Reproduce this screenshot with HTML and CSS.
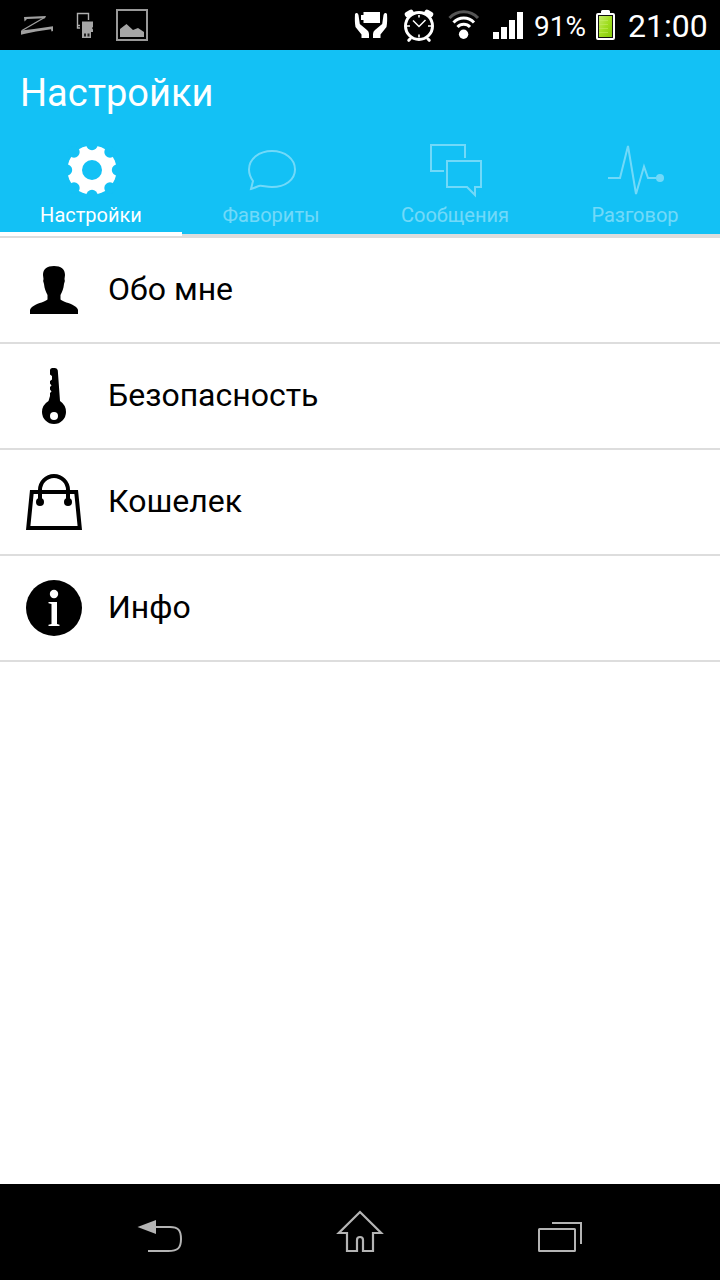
FILE: index.html
```html
<!DOCTYPE html>
<html lang="ru">
<head>
    <meta charset="UTF-8">
    <meta name="viewport" content="width=device-width, initial-scale=1.0">
    <title>Настройки</title>
    <link rel="stylesheet" href="styles.css">
</head>
<body>
    <div class="status-bar">
        <div class="notifications">
            <svg width="34" height="22" viewBox="20 14 34 22" fill="#a0a0a0">
                <path d="M24 17 L46 16 L45 18.200 L27 19 L24.500 21.500 Z"/>
                <path d="M44.500 17.500 L22 30.500" fill="none" stroke="#a0a0a0" stroke-width="1.300"/>
                <path d="M21 30.500 L34 29 L53 26.300 V31 L51.500 31.500 L51 29.200 L36 31.500 L24 34 L21 34.700 Z"/>
            </svg>
            <svg width="18" height="27" viewBox="76 11 18 27">
                <path d="M88.500 19 V12.500 H77.500 V27 H80 M78 24.500 H80" fill="none" stroke="#b0b0b0" stroke-width="1.400"/>
                <path d="M82 20.500 H93 V26 L92 27 L93 28.500 V31 H91 V37 H82 Z" fill="#a6a6a6"/>
                <path d="M84 32.500 H86 V35.500 H84 Z M87.500 32.500 H89.500 V35.500 H87.500 Z" fill="#222"/>
            </svg>
            <svg width="34" height="34" viewBox="116 8 34 34">
                <rect x="117" y="10" width="30" height="30" fill="none" stroke="#999" stroke-width="2"/>
                <path d="M120 37 V29 L126.500 24 L133 30 L138 28 L144 32 V37 Z" fill="#a6a6a6"/>
            </svg>
        </div>
        <div class="system">
            <svg width="34" height="28" viewBox="354 11 34 28" fill="#fff">
                <path d="M363.500 12 H380 V23 H363.500 V20 H361 V15 H363.500 Z"/>
                <path d="M356 13 Q358 12.500 358.500 15 L359.800 24 L367 30 Q369 31.500 369 34 V38 H361.500 V34.500 L355.500 27 Q354.500 22 355 14 Z"/>
                <path d="M386 13 Q384 12.500 383.500 15 L382.200 24 L375 30 Q373 31.500 373 34 V38 H380.500 V34.500 L386.500 27 Q387.500 22 387 14 Z"/>
            </svg>
            <svg class="alarm" width="32" height="34" viewBox="403 8 32 34" fill="none" stroke="#fff">
                <path d="M407.500 14.500 L411 12.500 M430.500 14.500 L427 12.500" stroke-width="5.500" stroke-linecap="round"/>
                <path d="M410 39 L408.800 40.300 M428 39 L429.200 40.300" stroke-width="3" stroke-linecap="round"/>
                <circle cx="419" cy="26" r="13.500" fill="#000" stroke-width="3"/>
                <path d="M419 15 V17.500 M419 34.500 V37.500 M407 26 H410 M428 26 H431" stroke-width="1.600"/>
                <path d="M413 20.500 L419 26.500 L425.500 20" stroke-width="1.500"/>
            </svg>
            <svg class="wifi" width="32" height="32" viewBox="448 9 32 32" fill="none" stroke="#fff" stroke-width="3">
                <path d="M449.500 18 A19.500 19.500 0 0 1 478 18" stroke="#555"/>
                <path d="M453.500 22.500 A14 14 0 0 1 474 22.500"/>
                <path d="M457.500 27 A8.500 8.500 0 0 1 470 27"/>
                <circle cx="463.600" cy="34.300" r="4.700" fill="#fff" stroke="none"/>
            </svg>
            <svg class="signal" width="31" height="28" viewBox="493 11 31 28" fill="#fff">
                <path d="M493 32 H499 V39 H493 Z M501 27 H507 V39 H501 Z M509 20 H515 V39 H509 Z M517 12 H523 V39 H517 Z"/>
            </svg>
            <span class="percent">91%</span>
            <svg class="battery" width="19" height="30" viewBox="596 10 19 30">
                <defs>
                    <linearGradient id="charge" x1="0" y1="0" x2="1" y2="1">
                        <stop offset="0" stop-color="#c4ea6a"/>
                        <stop offset="0.500" stop-color="#a0de20"/>
                        <stop offset="1" stop-color="#84c808"/>
                    </linearGradient>
                </defs>
                <path d="M601 13 V11.500 Q601 10 602.500 10 H608.500 Q610 10 610 11.500 V13 H613 Q615 13 615 15 V38 Q615 40 613 40 H598 Q596 40 596 38 V15 Q596 13 598 13 Z" fill="#fff"/>
                <rect x="598" y="15" width="15" height="23" fill="#111"/>
                <rect x="599" y="16" width="13" height="21" fill="url(#charge)"/>
                <path d="M599 20.500 H608 M599 24.500 H608 M599 28.500 H608 M599 32.500 H608" stroke="#c4ee60" stroke-width="1" opacity="0.600"/>
            </svg>
            <span class="clock">21:00</span>
        </div>
    </div>

    <header class="header">
        <h1>Настройки</h1>
        <nav class="tabs">
            <a class="tab tab-settings active">
                <svg width="56" height="56" viewBox="63 142 56 56">
                    <circle cx="92" cy="170" r="24.600" fill="#fff"/>
                    <g fill="#13c1f5">
                        <circle cx="92" cy="170" r="10"/>
                        <circle cx="92" cy="144.500" r="5.700"/>
                        <circle cx="110" cy="152" r="5.700"/>
                        <circle cx="117.500" cy="170" r="5.700"/>
                        <circle cx="110" cy="188" r="5.700"/>
                        <circle cx="92" cy="195.500" r="5.700"/>
                        <circle cx="74" cy="188" r="5.700"/>
                        <circle cx="66.500" cy="170" r="5.700"/>
                        <circle cx="74" cy="152" r="5.700"/>
                    </g>
                </svg>
                <span>Настройки</span>
            </a>
            <a class="tab tab-favorites">
                <svg width="56" height="56" viewBox="243 142 56 56" fill="none" stroke="#fff" stroke-width="2">
                    <path d="M251 189 L253 181 Q249 175.500 249 169.500 C249 159 259 151 272 151 C285 151 295 159 295 169.500 C295 180 285 187 272 187 C266 187 263 185.500 260 185.800 C257 186.200 255 188 251 189 Z"/>
                </svg>
                <span>Фавориты</span>
            </a>
            <a class="tab tab-messages">
                <svg width="56" height="56" viewBox="427 142 56 56" fill="none" stroke="#fff" stroke-width="2">
                    <path d="M444 171 H431 V145 H465 V158"/>
                    <path d="M447 161 H481 V187 H475 V195 L467 187 H447 Z"/>
                </svg>
                <span>Сообщения</span>
            </a>
            <a class="tab tab-talk">
                <svg width="60" height="56" viewBox="605 142 60 56" fill="none" stroke="#fff" stroke-width="2">
                    <path d="M608 178 H620 L628 146 L636 194 L644 166.500 L648 178 H656"/>
                    <circle cx="660" cy="178" r="4" fill="#fff" stroke="none"/>
                </svg>
                <span>Разговор</span>
            </a>
        </nav>
    </header>

    <ul class="menu">
        <li>
            <svg width="56" height="56" viewBox="26 262 56 56">
                <path d="M43 275 C43 269 47 266 54 266 C61 266 65 269 65 275 L64.500 279 Q65.500 281 64 284 C63.500 289 62 292 60.500 295 V299.500 C63 302 69 302.500 74.500 306 Q78 308 78 310.500 V314 H30 V310.500 Q30 308 33.500 306 C39 302.500 45 302 47.500 299.500 V295 C46 292 44.500 289 44 284 Q42.500 281 43.500 279 Z"/>
            </svg>
            <span>Обо мне</span>
        </li>
        <li>
            <svg width="56" height="56" viewBox="26 368 56 56">
                <path d="M50 370.500 Q50 368 52.500 368 H55 Q57.500 368 57.800 370.500 L60 401 Q66 405 66 412 A12 12 0 0 1 42 412 Q42 405 48.500 401 L50 396 V393 L51.500 391.500 L50 389.500 V387 L51.500 385.500 L50 383.500 V381 L52 379.500 V376 L50 374.500 Z"/>
                <circle cx="54" cy="416" r="4" fill="#fff"/>
            </svg>
            <span>Безопасность</span>
        </li>
        <li>
            <svg width="56" height="56" viewBox="26 474 56 56">
                <path d="M31.800 492 H76.200 L79.800 528 H28.200 Z M40 502 V490 A14 14 0 0 1 68 490 V502" fill="none" stroke="#000" stroke-width="4"/>
                <circle cx="40" cy="502" r="4"/>
                <circle cx="68" cy="502" r="4"/>
            </svg>
            <span>Кошелек</span>
        </li>
        <li>
            <svg width="56" height="56" viewBox="26 580 56 56">
                <circle cx="54" cy="608" r="28"/>
                <circle cx="54" cy="594" r="4.200" fill="#fff"/>
                <path d="M48.500 602 H57 V624 L59.500 624.800 V626 H48.500 V624.800 L51.500 624 V604 L48.500 603.300 Z" fill="#fff"/>
            </svg>
            <span>Инфо</span>
        </li>
    </ul>

    <footer class="nav-bar">
        <svg width="180" height="60" viewBox="70 1202 180 60" fill="none" stroke="#b4b4b4" stroke-width="2">
            <path d="M155 1227 H170 C178 1227 181 1230 181 1239 C181 1248 178 1251 168 1251 H148"/>
            <path d="M137.500 1227 L156 1220 V1234 Z" fill="#b4b4b4" stroke="none"/>
        </svg>
        <svg width="180" height="60" viewBox="270 1202 180 60" fill="none" stroke="#b4b4b4" stroke-width="2.200">
            <path d="M360 1212 L338.800 1233 H347 V1251 H357 V1240 Q357 1237 360 1237 Q363 1237 363 1240 V1251 H373 V1233 H381.200 Z"/>
        </svg>
        <svg width="180" height="60" viewBox="470 1202 180 60" fill="none" stroke="#b4b4b4" stroke-width="2">
            <rect x="539" y="1229" width="36" height="22" rx="0.500"/>
            <path d="M552 1223 H581 V1244"/>
        </svg>
    </footer>
</body>
</html>
```

FILE: styles.css
```css
* {
    margin: 0;
    padding: 0;
    box-sizing: border-box;
}

body {
    font-family: Roboto, 'Noto Sans', sans-serif;
    background-color: #fff;
    color: #000;
    width: 720px;
    height: 1280px;
    display: flex;
    flex-direction: column;
    overflow: hidden;
}

svg {
    display: block;
    flex-shrink: 0;
}

.status-bar {
    height: 50px;
    background-color: #000;
    color: #fff;
    display: flex;
    justify-content: space-between;
    align-items: center;
    padding: 0 12px 0 20px;
}

.notifications {
    display: flex;
    align-items: center;
    gap: 22px;
}

.system {
    display: flex;
    align-items: center;
}

.alarm {
    margin-left: 15px;
}

.wifi {
    margin-left: 13px;
}

.signal {
    margin-left: 13px;
    margin-right: 10px;
}

.percent {
    width: 53px;
    padding-top: 4px;
    font-size: 28px;
    line-height: 46px;
    white-space: nowrap;
}

.battery {
    margin-left: 9px;
    margin-right: 13px;
}

.clock {
    width: 80px;
    padding-top: 2px;
    font-size: 32px;
    line-height: 48px;
    white-space: nowrap;
}

.header {
    height: 188px;
    background-color: #13c1f5;
    color: #fff;
}

h1 {
    height: 92px;
    padding-left: 20px;
    font-size: 38px;
    font-weight: 400;
    line-height: 86px;
}

.tabs {
    display: flex;
    height: 96px;
    border-bottom: 2px solid #ddd;
}

.tab {
    display: flex;
    flex-direction: column;
    align-items: center;
    border-bottom: 2px solid #ddd;
    font-size: 20px;
}

.tab span {
    line-height: 34px;
    height: 34px;
}

.tab svg,
.tab span {
    opacity: 0.4;
}

.tab.active {
    border-bottom: 4px solid #fff;
}

.tab.active svg,
.tab.active span {
    opacity: 1;
}

.tab-settings {
    width: 182px;
}

.tab-favorites {
    width: 178px;
}

.tab-messages {
    width: 190px;
}

.tab-talk {
    width: 170px;
}

.menu {
    flex: 1;
    list-style: none;
}

.menu li {
    display: flex;
    align-items: center;
    gap: 26px;
    height: 106px;
    padding: 0 26px;
    border-bottom: 2px solid #ddd;
    font-size: 32px;
}

.menu span {
    padding-bottom: 2px;
}

.nav-bar {
    height: 96px;
    background-color: #000;
    display: flex;
    justify-content: center;
    gap: 20px;
    padding-top: 18px;
}
```
